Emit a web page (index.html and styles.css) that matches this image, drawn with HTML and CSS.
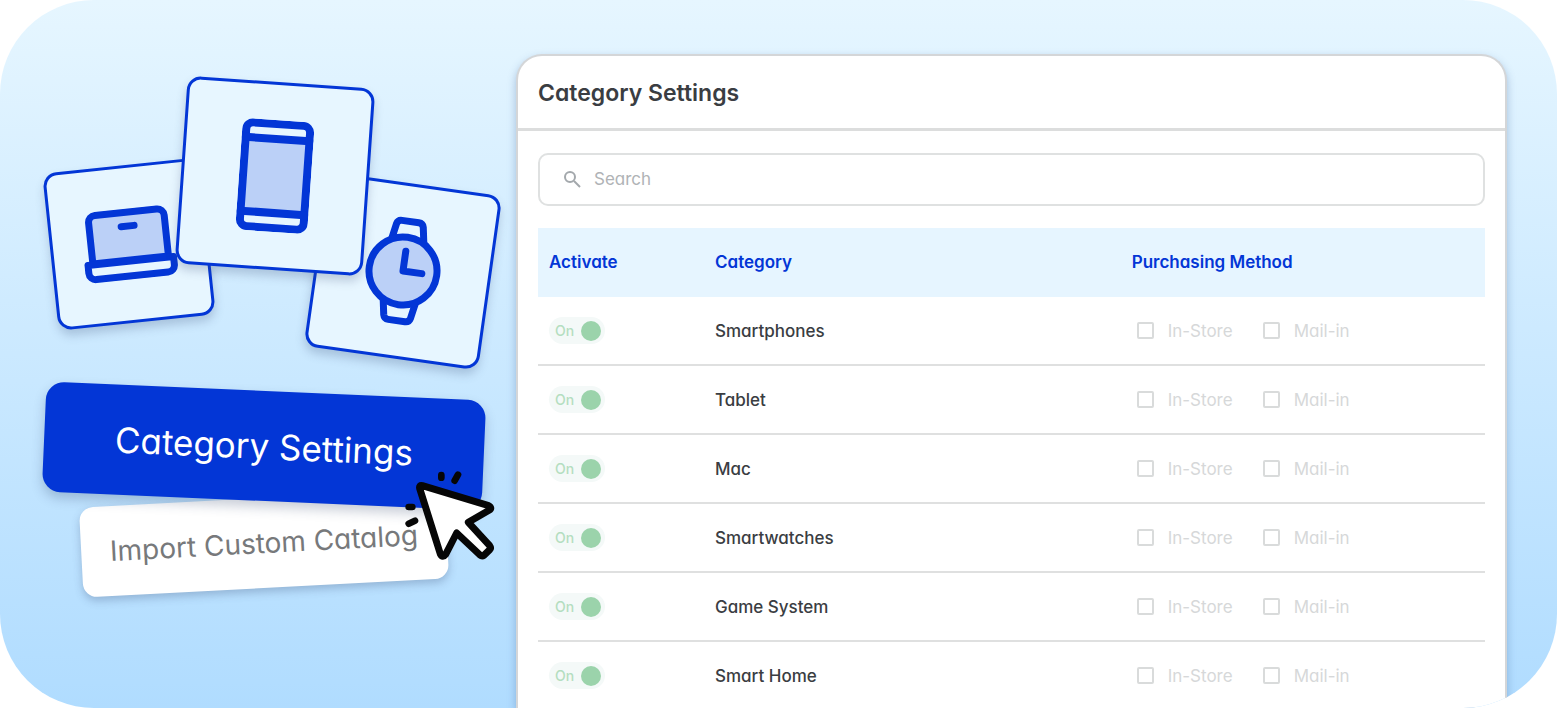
FILE: index.html
```html
<!DOCTYPE html>
<html lang="en">
<head>
<meta charset="UTF-8" />
<meta name="viewport" content="width=device-width, initial-scale=1" />
<title>Category Settings</title>
<link rel="stylesheet" href="styles.css">
</head>
<body>
  <main class="stage">
    <section class="promo">
      <div class="tiles" aria-hidden="true">
        <div class="tile tile-laptop">
          <svg width="94" height="72" viewBox="0 0 94 72">
            <path class="fill" d="M9 52V11a7 7 0 0 1 7-7h62a7 7 0 0 1 7 7v41z"/>
            <path d="M4 53h86v8a7 7 0 0 1-7 7H11a7 7 0 0 1-7-7z"/>
            <path d="M41 18h13"/>
          </svg>
        </div>
        <div class="tile tile-watch">
          <svg width="80" height="110" viewBox="0 0 80 110">
            <path d="M24 26l3-17q1-4 5-4h17q4 0 5 4l3 17M24 84l3 17q1 4 5 4h17q4 0 5-4l3-17"/>
            <circle class="fill" cx="40" cy="55" r="34"/>
            <path d="M40 35v20h19"/>
          </svg>
        </div>
        <div class="tile tile-phone">
          <svg width="72" height="112" viewBox="0 0 72 112">
            <path class="fill solid" d="M4 19h64v74H4z"/>
            <rect x="4" y="4" width="64" height="104" rx="7"/>
            <path d="M4 19h64M4 93h64"/>
          </svg>
        </div>
      </div>

      <div class="actions">
        <button class="btn btn-primary" type="button">Category Settings</button>
        <button class="btn btn-secondary" type="button">Import Custom Catalog</button>
        <svg class="cursor" viewBox="372 300 276 276" aria-hidden="true">
          <path class="arrow" d="M427 347L626 407Q638 414 627 421L565 457L629 527Q634 534 629 539L612 556Q606 560 600 555L530 489L497 553Q488 565 481 552L419 355Q417 345 427 347z"/>
          <path class="tick" d="M484 315v8M534 314l-10 18M386 411h11M386 461l19-9"/>
        </svg>
      </div>
    </section>

    <section class="panel">
      <header class="panel-header">
        <h1>Category Settings</h1>
      </header>
      <div class="panel-body">
        <label class="search">
          <svg width="20" height="20" viewBox="0 0 20 20" aria-hidden="true">
            <circle cx="8" cy="8" r="5"/>
            <path d="M12 12l6 6"/>
          </svg>
          <input type="search" placeholder="Search" aria-label="Search">
        </label>

        <table class="categories">
          <thead>
            <tr>
              <th class="col-activate" scope="col">Activate</th>
              <th class="col-category" scope="col">Category</th>
              <th scope="col">Purchasing Method</th>
            </tr>
          </thead>
          <tbody>
            <tr>
              <td><label class="toggle">On<input type="checkbox" checked></label></td>
              <td>Smartphones</td>
              <td>
                <div class="methods">
                  <label class="method"><input type="checkbox">In-Store</label>
                  <label class="method"><input type="checkbox">Mail-in</label>
                </div>
              </td>
            </tr>
            <tr>
              <td><label class="toggle">On<input type="checkbox" checked></label></td>
              <td>Tablet</td>
              <td>
                <div class="methods">
                  <label class="method"><input type="checkbox">In-Store</label>
                  <label class="method"><input type="checkbox">Mail-in</label>
                </div>
              </td>
            </tr>
            <tr>
              <td><label class="toggle">On<input type="checkbox" checked></label></td>
              <td>Mac</td>
              <td>
                <div class="methods">
                  <label class="method"><input type="checkbox">In-Store</label>
                  <label class="method"><input type="checkbox">Mail-in</label>
                </div>
              </td>
            </tr>
            <tr>
              <td><label class="toggle">On<input type="checkbox" checked></label></td>
              <td>Smartwatches</td>
              <td>
                <div class="methods">
                  <label class="method"><input type="checkbox">In-Store</label>
                  <label class="method"><input type="checkbox">Mail-in</label>
                </div>
              </td>
            </tr>
            <tr>
              <td><label class="toggle">On<input type="checkbox" checked></label></td>
              <td>Game System</td>
              <td>
                <div class="methods">
                  <label class="method"><input type="checkbox">In-Store</label>
                  <label class="method"><input type="checkbox">Mail-in</label>
                </div>
              </td>
            </tr>
            <tr>
              <td><label class="toggle">On<input type="checkbox" checked></label></td>
              <td>Smart Home</td>
              <td>
                <div class="methods">
                  <label class="method"><input type="checkbox">In-Store</label>
                  <label class="method"><input type="checkbox">Mail-in</label>
                </div>
              </td>
            </tr>
          </tbody>
        </table>
      </div>
    </section>
  </main>
</body>
</html>
```
FILE: styles.css
```css
/* Basic reset */
* {
  box-sizing: border-box;
}
body {
  margin: 0;
  background: #fff;
  color: #3a3d42;
  font-family: Inter, "Open Sans", sans-serif;
  font-feature-settings: "cv11"; /* single-storey a */
}
button, input {
  font: inherit;
  font-feature-settings: inherit;
}

.stage {
  display: flex;
  height: 100vh;
  padding-right: 50px;
  border-radius: 94px;
  background: linear-gradient(#e6f6ff, #b0dcff);
  overflow: hidden;
}

/* Left side: tilted tiles and buttons */
.promo {
  flex: 0 0 516px;
  padding-left: 12px;
}
.tiles {
  position: relative;
  height: 391px;
}
.tile {
  position: absolute;
  display: flex;
  justify-content: center;
  align-items: center;
  border: 3px solid #0336d6;
  border-radius: 14px;
  background: #e7f6ff;
  box-shadow: 0 6px 10px rgba(60, 80, 120, 0.25);
}
.tile svg {
  fill: none;
  stroke: #0336d6;
  stroke-width: 7;
  stroke-linecap: round;
  stroke-linejoin: round;
}
.tile .fill {
  fill: #bbd0f7;
}
.tile .solid {
  stroke: none;
}
.tile-laptop {
  left: 38px;
  top: 165px;
  width: 158px;
  height: 158px;
  transform: rotate(-6deg);
}
.tile-watch {
  left: 303px;
  top: 183px;
  width: 176px;
  height: 176px;
  transform: rotate(8deg);
}
.tile-phone {
  left: 169px;
  top: 82px;
  width: 188px;
  height: 188px;
  transform: rotate(4deg);
}
.tile-phone svg {
  stroke-width: 8;
}

.actions {
  position: relative;
  display: flex;
  flex-direction: column;
  align-items: center;
}
.btn {
  border: 0;
  cursor: pointer;
}
.btn-primary {
  z-index: 1;
  width: 440px;
  height: 110px;
  border-radius: 18px;
  background: #0336d6;
  color: #fff;
  font-size: 35px;
  box-shadow: 0 6px 12px rgba(40, 60, 100, 0.25);
  transform: rotate(2.5deg);
}
.btn-secondary {
  width: 366px;
  height: 90px;
  margin-top: -3px;
  border-radius: 14px;
  background: #fff;
  color: #77797b;
  font-size: 28px;
  box-shadow: 0 4px 8px rgba(60, 80, 120, 0.3);
  transform: rotate(-3deg);
}
.cursor {
  position: absolute;
  z-index: 2;
  left: 392px;
  top: 79px;
  width: 92px;
  height: 92px;
}
.cursor path {
  stroke: #060606;
  stroke-linecap: round;
  stroke-linejoin: round;
}
.arrow {
  fill: #fff;
  stroke-width: 21;
}
.tick {
  fill: none;
  stroke-width: 20;
}

/* Settings panel */
.panel {
  flex: 1;
  margin-top: 54px;
  border: 2px solid #d4d6d8;
  border-bottom: 0;
  border-radius: 26px 26px 0 0;
  background: #fff;
  box-shadow: 0 4px 8px rgba(50, 90, 150, 0.35);
}
.panel-header {
  padding: 22px 20px 20px;
  border-bottom: 3px solid #dcdddd;
}
h1 {
  margin: 0;
  font-size: 23px;
  line-height: 30px;
  font-weight: 600;
}
.panel-body {
  padding: 22px 20px 0;
}
.search {
  display: flex;
  align-items: center;
  gap: 12px;
  height: 53px;
  padding: 0 22px 2px;
  border: 2px solid #dfe1e1;
  border-radius: 10px;
}
.search svg {
  fill: none;
  stroke: #a3a8ac;
  stroke-width: 2;
}
.search input {
  flex: 1;
  padding: 0;
  border: 0;
  outline: 0;
  background: none;
  font-size: 17px;
}
.search input::placeholder {
  color: #b0b3b6;
}

.categories {
  width: 100%;
  margin-top: 22px;
  border-collapse: separate;
  border-spacing: 0;
  table-layout: fixed;
  font-size: 17px;
}
.categories th {
  height: 69px;
  padding: 0 11px 2px;
  background: #e6f5ff;
  color: #0336d6;
  font-weight: 600;
  text-align: left;
}
.categories td {
  height: 69px;
  padding: 0 11px;
  border-bottom: 2px solid #dfe0e0;
  font-weight: 500;
}
.col-activate {
  width: 166px;
}
.col-category {
  width: 44%;
}

.toggle {
  display: inline-flex;
  align-items: center;
  justify-content: space-between;
  width: 56px;
  height: 27px;
  padding: 0 4px 0 6px;
  border-radius: 14px;
  background: #f4f9f8;
  color: #b4dec0;
  font-size: 14px;
  vertical-align: middle;
}
.toggle input {
  appearance: none;
  width: 20px;
  height: 20px;
  margin: 0;
  border-radius: 50%;
  background: #9bd3ab;
}
.methods {
  display: flex;
  gap: 30px;
  padding-left: 5px;
}
.method {
  display: flex;
  align-items: center;
  gap: 14px;
  color: #d6d8d9;
  font-weight: 400;
}
.method input {
  appearance: none;
  width: 17px;
  height: 17px;
  margin: 0;
  border: 2px solid #d9dbdb;
  border-radius: 2px;
}
```
